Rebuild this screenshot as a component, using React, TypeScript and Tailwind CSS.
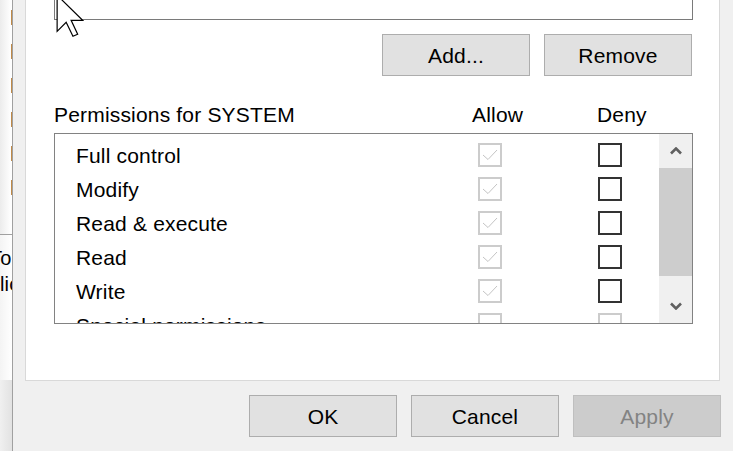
import React from "react";

type Perm = { name: string; disabled?: boolean };

const perms: Perm[] = [
  { name: "Full control" },
  { name: "Modify" },
  { name: "Read & execute" },
  { name: "Read" },
  { name: "Write" },
  { name: "Special permissions", disabled: true },
];

function DialogButton({ label, disabled }: { label: string; disabled?: boolean }) {
  return (
    <button
      className={
        disabled
          ? "h-[42px] w-[148px] border border-[#bfbfbf] bg-[#cccccc] pt-px text-center leading-[40px] text-[#838383]"
          : "h-[42px] w-[148px] border border-[#adadad] bg-[#e1e1e1] pt-px text-center leading-[40px] text-black"
      }
    >
      {label}
    </button>
  );
}

function AllowBox({ checked }: { checked: boolean }) {
  return (
    <div className="h-6 w-6 shrink-0 border-2 border-[#cccccc]">
      {checked && (
        <svg width="20" height="20" viewBox="0 0 20 20" fill="none">
          <polyline points="3,10 8,14.5 17,5" stroke="#c4c4c4" strokeWidth="1" />
        </svg>
      )}
    </div>
  );
}

function DenyBox({ disabled }: { disabled?: boolean }) {
  return (
    <div
      className={
        disabled
          ? "h-6 w-6 shrink-0 border-2 border-[#cccccc]"
          : "h-6 w-6 shrink-0 border-2 border-[#333333]"
      }
    />
  );
}

function Chevron({ down }: { down?: boolean }) {
  return (
    <svg width="12" height="8" viewBox="0 0 12 8" fill="none">
      <polyline
        points={down ? "1,1.5 6,6.5 11,1.5" : "1,6.5 6,1.5 11,6.5"}
        stroke="#606060"
        strokeWidth="2.6"
      />
    </svg>
  );
}

function LeftStrip() {
  return (
    <div className="flex w-[12px] shrink-0 flex-col overflow-hidden">
      <div className="flex h-[234px]">
        <div className="flex-1 bg-gradient-to-r from-[#ececec] to-[#ffffff]" />
        <div className="h-[200px] w-px bg-[repeating-linear-gradient(to_bottom,transparent_0px,transparent_10px,#c08a48_10px,#c08a48_25px,transparent_25px,transparent_34px)]" />
      </div>
      <div className="h-px bg-[#a0a0a0]" />
      <div className="h-[145px] bg-gradient-to-r from-[#f4f4f4] to-[#ffffff] pt-[10px] text-[20px] leading-[26px]">
        <div className="-ml-[10px] whitespace-nowrap">To</div>
        <div className="whitespace-nowrap">lic</div>
      </div>
      <div className="flex-1 bg-gradient-to-r from-[#f0f0f0] to-[#e2e2e2]" />
    </div>
  );
}

export default function App() {
  return (
    <div className="relative flex h-[451px] w-[733px] overflow-hidden bg-white font-['Liberation_Sans',Arial,sans-serif] text-[21px] tracking-[0.18px] text-black">
      <LeftStrip />

      <div className="flex flex-1 flex-col border-l border-[#a0a0a0] bg-[#f0f0f0]">
        <div className="ml-[12px] mr-[13px] h-[381px] border-x border-b border-[#d9d9d9] bg-white pl-[28px] pr-[26px]">
          <div className="h-[20px] border-x border-b border-[#7a7a7a] bg-white" />

          <div className="mt-[14px] flex justify-end gap-[14px] pr-px">
            <DialogButton label="Add..." />
            <DialogButton label="Remove" />
          </div>

          <div className="mt-[26px] flex h-[24px] pt-px leading-[24px]">
            <span className="w-[418px]">Permissions for SYSTEM</span>
            <span className="w-[125px]">Allow</span>
            <span>Deny</span>
          </div>

          <div className="mt-[7px] flex h-[191px] border border-[#828282] bg-white">
            <div className="flex-1 overflow-hidden pt-[4px]">
              {perms.map((p) => (
                <div key={p.name} className="flex h-[34px] shrink-0 items-center pl-[21px]">
                  <span className="mt-[2px] w-[402px] whitespace-nowrap leading-[32px]">{p.name}</span>
                  <div className="w-[120px]">
                    <AllowBox checked={!p.disabled} />
                  </div>
                  <DenyBox disabled={p.disabled} />
                </div>
              ))}
            </div>

            <div className="flex w-[33px] shrink-0 flex-col bg-[#f0f0f0]">
              <div className="flex h-[34px] items-center justify-center">
                <Chevron />
              </div>
              <div className="h-[108px] bg-[#cdcdcd]" />
              <div className="h-[13px]" />
              <div className="flex h-[34px] items-center justify-center">
                <Chevron down />
              </div>
            </div>
          </div>
        </div>

        <div className="mt-[14px] flex justify-end gap-[14px] pr-[12px]">
          <DialogButton label="OK" />
          <DialogButton label="Cancel" />
          <DialogButton label="Apply" disabled />
        </div>
      </div>

      {/* mouse pointer */}
      <svg
        className="absolute left-[56px] top-[-6px]"
        width="28"
        height="44"
        viewBox="0 0 12.4 19.4"
      >
        <polygon
          points="0.5,0.5 0.5,16.5 4.5,12.5 7.5,18.7 9.6,17.8 6.7,11.6 11.8,11.6"
          fill="white"
          stroke="black"
          strokeWidth="1.2"
          vectorEffect="non-scaling-stroke"
          strokeLinejoin="miter"
        />
      </svg>
    </div>
  );
}
